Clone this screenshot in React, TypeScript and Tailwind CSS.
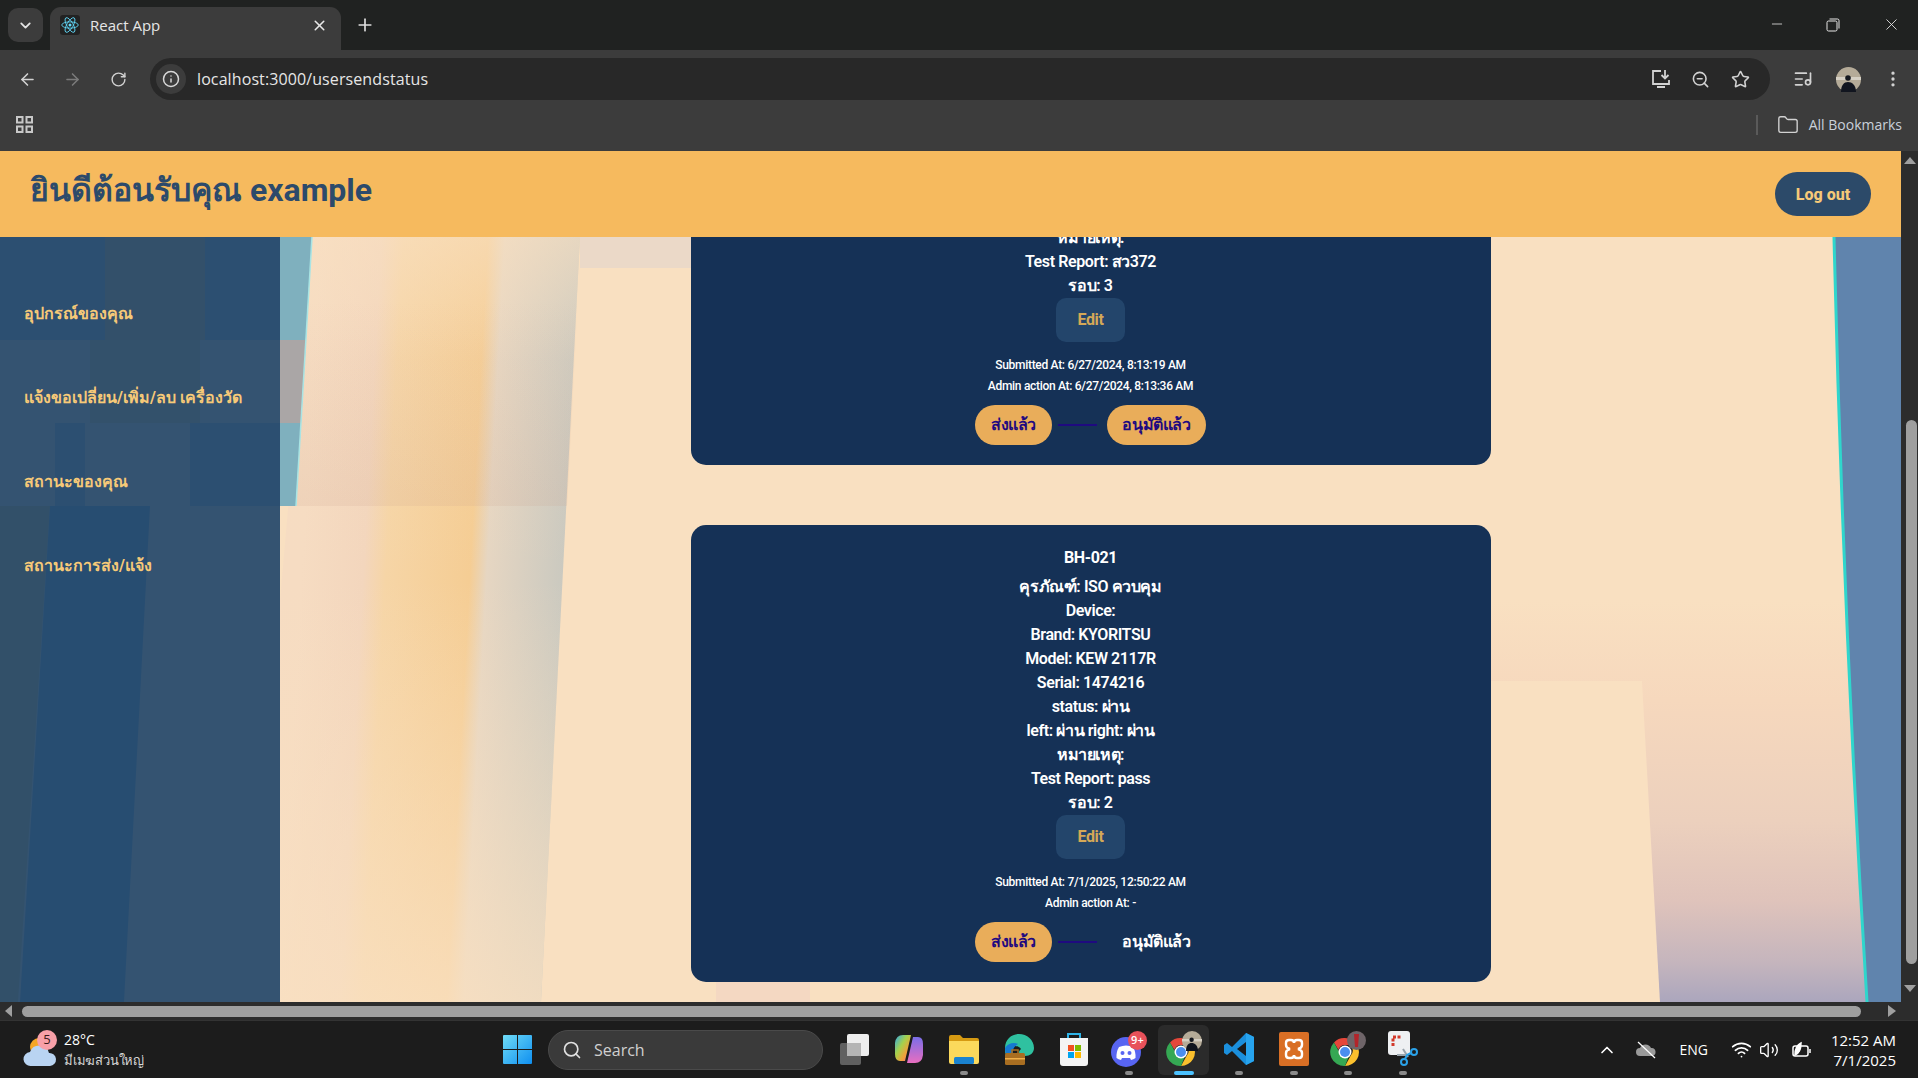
import {
  ArrowLeft,
  ArrowRight,
  ChevronDown,
  ChevronUp,
  EllipsisVertical,
  Folder,
  Info,
  ListMusic,
  Minus,
  Plus,
  RotateCw,
  Search,
  Star,
  Volume2,
  Wifi,
  X,
  ZoomOut,
} from "lucide-react";

const appFont = "font-['Roboto','Noto_Sans','Noto_Sans_CJK_SC',sans-serif]";
const uiFont = "font-['Open_Sans','Noto_Sans','Noto_Sans_CJK_SC',sans-serif]";

const menu = ["อุปกรณ์ของคุณ", "แจ้งขอเปลี่ยน/เพิ่ม/ลบ เครื่องวัด", "สถานะของคุณ", "สถานะการส่ง/แจ้ง"];

const cards = [
  {
    lines: ["หมายเหตุ:", "Test Report: สว372", "รอบ: 3"],
    submitted: "Submitted At: 6/27/2024, 8:13:19 AM",
    admin: "Admin action At: 6/27/2024, 8:13:36 AM",
    approved: true,
  },
  {
    title: "BH-021",
    lines: [
      "คุรภัณฑ์: ISO ควบคุม",
      "Device:",
      "Brand: KYORITSU",
      "Model: KEW 2117R",
      "Serial: 1474216",
      "status: ผ่าน",
      "left: ผ่าน right: ผ่าน",
      "หมายเหตุ:",
      "Test Report: pass",
      "รอบ: 2",
    ],
    submitted: "Submitted At: 7/1/2025, 12:50:22 AM",
    admin: "Admin action At: -",
    approved: false,
  },
];

function ReactLogo() {
  return (
    <div className="flex h-5 w-5 items-center justify-center rounded-[3px] bg-[#222]">
      <svg width="18" height="18" viewBox="-12 -12 24 24" fill="none" stroke="#61dafb" strokeWidth="1.1">
        <circle r="2" fill="#61dafb" stroke="none" />
        <ellipse rx="11" ry="4.2" />
        <ellipse rx="11" ry="4.2" transform="rotate(60)" />
        <ellipse rx="11" ry="4.2" transform="rotate(120)" />
      </svg>
    </div>
  );
}

function Avatar({ size }: { size: number }) {
  return (
    <svg width={size} height={size} viewBox="0 0 25 25">
      <circle cx="12.5" cy="12.5" r="12.5" fill="#b5ab98" />
      <path d="M0 10h25v3H0z" fill="#d6d0c4" />
      <circle cx="12" cy="11" r="2.8" fill="#15181f" />
      <path d="M5 25c0-7 3-10 7-10s8 3 8 10z" fill="#11151f" />
    </svg>
  );
}

function TabStrip() {
  return (
    <div className="flex h-[50px] shrink-0 items-start bg-[#202221] pl-2 pt-2">
      <div className="flex h-[34px] w-[35px] items-center justify-center rounded-[10px] bg-[#3c3c3c] text-[#e4e4e4]">
        <ChevronDown size={17} strokeWidth={2.5} />
      </div>
      <div className="-mt-px ml-[7px] flex h-[43px] w-[291px] items-center rounded-t-[11px] bg-[#3c3c3c] pb-[7px] pl-[10px] pr-[13px]">
        <ReactLogo />
        <span className={`ml-[10px] flex-1 text-[15px] text-[#e6e6e6] ${uiFont}`}>React App</span>
        <X size={17} strokeWidth={2.2} className="text-[#e8e8e8]" />
      </div>
      <Plus size={20} strokeWidth={2} className="ml-[14px] mt-[7px] text-[#dedede]" />
      <div className="ml-auto flex text-[#e8e8e8]">
        <div className="flex w-[50px] justify-center pt-[8px]">
          <Minus size={16} strokeWidth={1.2} />
        </div>
        <div className="flex w-[62px] justify-center pt-[10px]">
          <svg width="14" height="14" viewBox="0 0 14 14" fill="none" stroke="currentColor">
            <rect x="1" y="3" width="10" height="10" rx="1.5" />
            <path d="M3.5 1h8a1.5 1.5 0 0 1 1.5 1.5v8" />
          </svg>
        </div>
        <div className="flex w-[54px] justify-center pt-[7px]">
          <X size={19} strokeWidth={1.1} />
        </div>
      </div>
    </div>
  );
}

function Toolbar() {
  return (
    <div className="flex h-[50px] shrink-0 items-center bg-[#3c3c3c] pl-[18px] pt-[8px]">
      <ArrowLeft size={19} className="text-[#d2d2d2]" />
      <ArrowRight size={19} className="ml-[26px] text-[#7b7b7b]" />
      <RotateCw size={17} className="ml-[28px] text-[#d2d2d2]" />
      <div className="ml-[23px] flex h-[42px] w-[1620px] items-center rounded-full bg-[#282828] pl-[6px] pr-[20px]">
        <div className="flex h-[30px] w-[30px] items-center justify-center rounded-full bg-[#3c3c3c]">
          <Info size={18} className="text-[#d8d8d8]" />
        </div>
        <span className={`ml-[11px] flex-1 text-[16px] tracking-[0.1px] text-[#e6e6e6] ${uiFont}`}>
          localhost:3000/usersendstatus
        </span>
        <svg width="20" height="20" viewBox="0 0 20 20" fill="none" stroke="#d2d2d2" strokeWidth="1.8">
          <path d="M10 2H2v13h16v-4M6 18h8" />
          <path d="M14 1v8M10.5 6l3.5 3.5L17.500 6" />
        </svg>
        <ZoomOut size={19} className="ml-[20px] text-[#d2d2d2]" />
        <Star size={19} className="ml-[21px] text-[#d2d2d2]" />
      </div>
      <ListMusic size={20} className="ml-[23px] text-[#d2d2d2]" />
      <div className="ml-[23px] flex">
        <Avatar size={25} />
      </div>
      <EllipsisVertical size={20} className="ml-[22px] text-[#d2d2d2]" />
    </div>
  );
}

function BookmarksBar() {
  return (
    <div className="flex h-[51px] shrink-0 items-center bg-[#3c3c3c] pl-[16px] pb-[2px]">
      <svg width="17" height="17" viewBox="0 0 17 17" fill="none" stroke="#c8c8c8" strokeWidth="2">
        <rect x="1" y="1" width="5.500" height="5.500" />
        <rect x="10.500" y="1" width="5.500" height="5.500" />
        <rect x="1" y="10.500" width="5.500" height="5.500" />
        <rect x="10.500" y="10.500" width="5.500" height="5.500" />
      </svg>
      <div className="ml-auto h-[20px] w-[2px] bg-[#5a5a5a]" />
      <Folder size={22} strokeWidth={1.5} className="ml-[19px] text-[#d2d2d2]" />
      <span className={`ml-[10px] mr-[16px] text-[14px] text-[#c9d0da] ${uiFont}`}>All Bookmarks</span>
    </div>
  );
}

// blurred desktop picture behind the page
function Wallpaper() {
  return (
    <svg className="absolute inset-0" width="1901" height="851" viewBox="0 151 1901 851" preserveAspectRatio="none">
      <defs>
        <linearGradient id="bands" gradientUnits="userSpaceOnUse" x1="300" y1="600" x2="580" y2="615">
          <stop offset="0" stopColor="#f6dcc2" />
          <stop offset="0.22" stopColor="#f3d6bd" />
          <stop offset="0.3" stopColor="#f6d5a6" />
          <stop offset="0.6" stopColor="#f5cd94" />
          <stop offset="0.66" stopColor="#e6d6c2" />
          <stop offset="1" stopColor="#c4c6bf" />
        </linearGradient>
        <linearGradient id="fade" x1="0" y1="0" x2="0" y2="1">
          <stop offset="0" stopColor="#f9e0c1" stopOpacity="0.6" />
          <stop offset="0.16" stopColor="#f9e0c1" stopOpacity="0.1" />
          <stop offset="0.45" stopColor="#f9e0c1" stopOpacity="0" />
          <stop offset="1" stopColor="#f9e0c1" stopOpacity="0.8" />
        </linearGradient>
        <linearGradient id="shade" x1="0" y1="0" x2="0" y2="1">
          <stop offset="0" stopColor="#c9a08c" stopOpacity="0" />
          <stop offset="1" stopColor="#c9a08c" stopOpacity="0.16" />
        </linearGradient>
        <linearGradient id="dusk" x1="0" y1="0" x2="0" y2="1">
          <stop offset="0" stopColor="#f9e0c1" />
          <stop offset="0.25" stopColor="#f6d8bd" />
          <stop offset="0.55" stopColor="#ecd0bd" />
          <stop offset="0.75" stopColor="#dfc3bb" />
          <stop offset="0.9" stopColor="#c5b5bd" />
          <stop offset="1" stopColor="#aba6bd" />
        </linearGradient>
      </defs>
      <rect x="0" y="151" width="1901" height="851" fill="#f9e0c1" />

      <path d="M0 237h105v103H0z" fill="#a8b6c4" />
      <path d="M105 237h100v103H105z" fill="#f4c478" />
      <path d="M205 237h75v103h-75z" fill="#a8b6c4" />
      <path d="M90 340h110v83H90z" fill="#f2c888" />
      <path d="M55 423h30v83H55zM190 423h90v83h-90z" fill="#a8b6c4" />
      <path d="M0 506h50l-32 496H0z" fill="#e6c070" />
      <path d="M50 506h100l-26 496H20z" fill="#7e9fc4" />

      <path d="M580 237h111v31H580z" fill="#ebd9c8" />
      <path d="M312 237h268l-39 765H280V600z" fill="url(#bands)" />
      <path d="M312 237h268l-39 765H280V600z" fill="url(#fade)" />
      <path d="M300 300h278l-11 206H292z" fill="url(#shade)" />
      <path d="M280 237h32l-16 269h-16z" fill="#7fb0be" />
      <path d="M280 340h26l-5 83h-21z" fill="#aaa6a6" />
      <path d="M312 237l-16 269" fill="none" stroke="#a8e4e4" strokeWidth="1.500" />
      <path d="M716 982h94v20h-94z" fill="#f4d8c2" />

      <path d="M1491 600h360l16 402H1491z" fill="url(#dusk)" />
      <path d="M1491 681h151l18 321h-169z" fill="#f9e0c1" />
      <path d="M1834 237Q1843 620 1867 1002H1901V237z" fill="#6084ad" />
      <path d="M1834 237Q1843 620 1867 1002" fill="none" stroke="#2fd6cc" strokeWidth="3" />
    </svg>
  );
}

function Sidebar() {
  return (
    <aside className="w-[280px] shrink-0 bg-[#1e4468]/90 pt-[35px]">
      {menu.map((m) => (
        <div key={m} className={`flex h-[84px] items-center pl-6 text-[16px] font-bold text-[#f6c978] ${appFont}`}>
          {m}
        </div>
      ))}
    </aside>
  );
}

function StatusCard({ card }: { card: (typeof cards)[number] }) {
  return (
    <div className="flex w-[800px] shrink-0 flex-col items-center rounded-[15px] bg-[#153156] pb-5 pt-[21px] text-center tracking-[-0.4px] text-white">
      {card.title && <h3 className="mb-[5px] h-6 text-[16px] font-bold leading-6">{card.title}</h3>}
      {card.lines.map((l) => (
        <p key={l} className="h-6 text-[16px] font-semibold leading-6">
          {l}
        </p>
      ))}
      <div className="flex h-[44px] w-[69px] items-center justify-center rounded-[10px] bg-[#23456b] text-[16px] font-bold text-[#d4a857]">
        Edit
      </div>
      <p className="mt-[13px] h-[21px] text-[12px] font-medium leading-[21px] tracking-[-0.3px]">{card.submitted}</p>
      <p className="h-[21px] text-[12px] font-medium leading-[21px] tracking-[-0.3px]">{card.admin}</p>
      <div className="mt-[8px] flex items-center">
        <div className="flex h-10 w-[77px] items-center justify-center rounded-[20px] bg-[#e9ad5a] text-[16px] font-bold text-[#1f0a80]">
          ส่งแล้ว
        </div>
        <div className="ml-[6px] mr-[10px] h-[2px] w-[39px] bg-[#1f0a80]" />
        <div
          className={
            card.approved
              ? "flex h-10 w-[99px] items-center justify-center rounded-[20px] bg-[#e9ad5a] text-[16px] font-bold text-[#1f0a80]"
              : "flex h-10 w-[99px] items-center justify-center rounded-[20px] text-[16px] font-bold text-white"
          }
        >
          อนุมัติแล้ว
        </div>
      </div>
    </div>
  );
}

function PageViewport() {
  return (
    <div className="flex h-[851px] shrink-0">
      <div className={`relative flex min-w-0 flex-1 flex-col ${appFont}`}>
        <Wallpaper />
        <header className="relative flex h-[86px] shrink-0 items-center justify-between bg-[#f6ba5e] pl-[30px] pr-[30px]">
          <h1 className="-mt-[8px] text-[32px] font-bold text-[#2c4a6b]">ยินดีต้อนรับคุณ example</h1>
          <button className="h-[44px] w-[96px] rounded-full bg-[#2c4a69] pt-px text-[16px] font-extrabold text-[#f6c978]">
            Log out
          </button>
        </header>
        <div className="relative flex min-h-0 flex-1">
          <Sidebar />
          <main className="flex min-w-0 flex-1 flex-col items-center justify-end gap-[60px] overflow-hidden pb-5">
            {cards.map((c) => (
              <StatusCard key={c.submitted} card={c} />
            ))}
          </main>
        </div>
      </div>
      <div className="flex w-[17px] shrink-0 flex-col items-center bg-[#2c2c2c] pt-[6px]">
        <div className="h-0 w-0 border-x-[6px] border-b-[7px] border-x-transparent border-b-[#9f9f9f]" />
        <div className="ml-[4px] mt-[256px] h-[544px] w-[11px] rounded-full bg-[#9f9f9f]" />
        <div className="mt-[21px] h-0 w-0 border-x-[6px] border-t-[7px] border-x-transparent border-t-[#9f9f9f]" />
      </div>
    </div>
  );
}

function HScrollbar() {
  return (
    <div className="flex h-[18px] shrink-0 items-center bg-[#2c2c2c] pl-[5px]">
      <div className="h-0 w-0 border-y-[6px] border-r-[7px] border-y-transparent border-r-[#9f9f9f]" />
      <div className="ml-[10px] h-[11px] w-[1839px] rounded-full bg-[#9f9f9f]" />
      <div className="ml-[27px] h-0 w-0 border-y-[6px] border-l-[8px] border-y-transparent border-l-[#9f9f9f]" />
    </div>
  );
}

function WeatherIcon() {
  return (
    <div className="relative h-[40px] w-[34px]">
      <svg width="34" height="40" viewBox="0 0 34 40" className="absolute left-0 top-0">
        <circle cx="16" cy="17" r="9" fill="#f5a623" />
        <path d="M8 36a7 7 0 0 1-1-14 10 10 0 0 1 19 1 6.500 6.500 0 0 1 1 13z" fill="#b9d4f2" />
      </svg>
      <span className="absolute left-[14px] top-0 flex h-5 w-5 items-center justify-center rounded-full bg-[#f8a0a8] text-[13px] text-[#3a1a1a]">
        5
      </span>
    </div>
  );
}

function WindowsLogo() {
  return (
    <svg width="29" height="29" viewBox="0 0 29 29">
      <defs>
        <linearGradient id="win" x1="0" y1="0" x2="1" y2="1">
          <stop offset="0" stopColor="#6fdcf7" />
          <stop offset="1" stopColor="#0f8ff0" />
        </linearGradient>
      </defs>
      <path d="M0 1a1 1 0 0 1 1-1h13v14H0zM15 0h13a1 1 0 0 1 1 1v13H15zM0 15h14v14H1a1 1 0 0 1-1-1zM15 15h14v13a1 1 0 0 1-1 1H15z" fill="url(#win)" />
    </svg>
  );
}

function ChromeIcon() {
  return (
    <svg width="30" height="30" viewBox="0 0 30 30">
      <path d="M15 1a14 14 0 0 1 12.100 7H15a7 7 0 0 0-6.600 4.700L4 5.400A14 14 0 0 1 15 1z" fill="#e5473a" />
      <path d="M27.100 8A14 14 0 0 1 15 29l5.800-10.500A7 7 0 0 0 20 8z" fill="#fbc02d" />
      <path d="M15 29A14 14 0 0 1 4 5.400l6 11a7 7 0 0 0 8.800 3z" fill="#35a853" />
      <circle cx="15" cy="15" r="6.500" fill="#fff" />
      <circle cx="15" cy="15" r="5" fill="#4a8ef0" />
    </svg>
  );
}

const taskIcons = [
  {
    key: "view",
    icon: (
      <svg width="30" height="32" viewBox="0 0 30 32">
        <rect x="1" y="10" width="21" height="22" rx="2" fill="#606060" />
        <rect x="8" y="1" width="22" height="22" rx="2" fill="#eeeeee" />
        <rect x="8" y="10" width="14" height="13" fill="#b5b5b5" />
      </svg>
    ),
  },
  {
    key: "copilot",
    icon: (
      <svg width="28" height="30" viewBox="0 0 28 30">
        <defs>
          <linearGradient id="cop" x1="0" y1="0" x2="1" y2="1">
            <stop offset="0" stopColor="#2fa9e8" />
            <stop offset="0.4" stopColor="#a6d14a" />
            <stop offset="0.7" stopColor="#f3a03a" />
            <stop offset="1" stopColor="#e35ea8" />
          </linearGradient>
          <linearGradient id="cop2" x1="0" y1="0" x2="0" y2="1">
            <stop offset="0" stopColor="#7a6ee8" />
            <stop offset="1" stopColor="#e86ec0" />
          </linearGradient>
        </defs>
        <path d="M8 1h8l-6 26H5Q0 27 0 20V9q1-8 8-8z" fill="url(#cop)" />
        <path d="M20 29h-8l6-26h5q5 0 5 7v11q-1 8-8 8z" fill="url(#cop2)" />
      </svg>
    ),
  },
  {
    key: "files",
    dot: true,
    icon: (
      <svg width="30" height="30" viewBox="0 0 30 30">
        <path d="M0 3a2 2 0 0 1 2-2h9l3 3h14a2 2 0 0 1 2 2v4H0z" fill="#d69a12" />
        <path d="M0 7h30v21a2 2 0 0 1-2 2H2a2 2 0 0 1-2-2z" fill="#fbd95c" />
        <rect x="5" y="23" width="20" height="7" rx="1.500" fill="#1a83d0" />
      </svg>
    ),
  },
  {
    key: "edge",
    icon: (
      <svg width="30" height="32" viewBox="0 0 30 32">
        <path d="M1 15C1 6 8 1 15 1c8 0 15 6 15 14 0 5-4 8-9 8-3 0-6-1-6-4 0-1 1-2 2-3-2-3-7-4-10-2-3 1-5 4-6 8z" fill="#2fc1a0" />
        <path d="M1 15c3-5 9-6 13-4-3 2-6 5-5 10 0 4 3 8 8 9C8 31 1 25 1 15z" fill="#1679d1" />
        <rect x="1" y="20" width="20" height="12" rx="1.500" fill="#a96e21" />
        <rect x="8" y="17" width="6" height="4" fill="none" stroke="#a96e21" strokeWidth="1.500" />
        <rect x="1" y="25" width="20" height="1.500" fill="#f0b04a" />
      </svg>
    ),
  },
  {
    key: "store",
    icon: (
      <svg width="30" height="34" viewBox="0 0 30 34">
        <path d="M9 7V2h12v5" fill="none" stroke="#2fb4e8" strokeWidth="2" />
        <path d="M1 6h28v25a3 3 0 0 1-3 3H4a3 3 0 0 1-3-3z" fill="#f4f4f4" />
        <rect x="9" y="13" width="6" height="6" fill="#f25022" />
        <rect x="16" y="13" width="6" height="6" fill="#7fba00" />
        <rect x="9" y="20" width="6" height="6" fill="#00a4ef" />
        <rect x="16" y="20" width="6" height="6" fill="#ffb900" />
      </svg>
    ),
  },
  {
    key: "discord",
    dot: true,
    icon: (
      <div className="relative h-[36px] w-[36px]">
        <svg width="30" height="30" viewBox="0 0 30 30" className="absolute bottom-0 left-0">
          <circle cx="15" cy="15" r="15" fill="#5865f2" />
          <path d="M8 10q7-3 14 0 3 5 2.500 11-2 1.500-4.500 2l-1-2h-8l-1 2q-2.500-.5-4.500-2Q5 15 8 10z" fill="#fff" />
          <circle cx="11.500" cy="16" r="2" fill="#5865f2" />
          <circle cx="18.500" cy="16" r="2" fill="#5865f2" />
        </svg>
        <span className="absolute right-0 top-0 flex h-[19px] w-[19px] items-center justify-center rounded-full bg-[#e8515a] text-[11px] font-semibold text-white">
          9+
        </span>
      </div>
    ),
  },
  {
    key: "chrome",
    active: true,
    icon: (
      <div className="relative h-[36px] w-[36px]">
        <div className="absolute bottom-0 left-0">
          <ChromeIcon />
        </div>
        <div className="absolute right-0 top-0 flex">
          <Avatar size={20} />
        </div>
      </div>
    ),
  },
  {
    key: "code",
    dot: true,
    icon: (
      <svg width="30" height="34" viewBox="0 0 30 34">
        <path d="M22 1l8 4v24l-8 4L8 19l-5 4-3-2v-8l3-2 5 4z" fill="#1b8fdc" />
        <path d="M22 10v14l-9-7z" fill="#1a1a1a" />
        <path d="M22 1l8 4v24l-8 4z" fill="#27a4ee" />
      </svg>
    ),
  },
  {
    key: "xampp",
    dot: true,
    icon: (
      <svg width="30" height="34" viewBox="0 0 30 34">
        <rect width="30" height="34" rx="2" fill="#d96f25" />
        <path d="M7 11q0-3 3-3h2q3 0 3 3 0-3 3-3h2q3 0 3 3v2q0 3-4 4 4 1 4 4v2q0 3-3 3h-2q-3 0-3-3 0 3-3 3h-2q-3 0-3-3v-2q0-3 4-4-4-1-4-4z" fill="none" stroke="#fff" strokeWidth="2.400" />
      </svg>
    ),
  },
  {
    key: "chrome2",
    dot: true,
    icon: (
      <div className="relative h-[36px] w-[36px]">
        <div className="absolute bottom-0 left-0">
          <ChromeIcon />
        </div>
        <svg width="19" height="19" viewBox="0 0 19 19" className="absolute right-0 top-0">
          <circle cx="9.500" cy="9.500" r="9.500" fill="#6e6468" />
          <path d="M7 3h5l-1 13H8z" fill="#b3242a" />
        </svg>
      </div>
    ),
  },
  {
    key: "snip",
    dot: true,
    icon: (
      <svg width="30" height="36" viewBox="0 0 30 36">
        <rect width="22" height="24" rx="3" fill="#eef0f2" />
        <path d="M5 15V6h9" fill="none" stroke="#d23a2c" strokeWidth="3" strokeDasharray="3 1.500" />
        <path d="M15 18l5 8M9 24h9" stroke="#9aa5ad" strokeWidth="2" />
        <circle cx="16" cy="31" r="3" fill="none" stroke="#2aa1e8" strokeWidth="2" />
        <circle cx="26" cy="21" r="3" fill="none" stroke="#2aa1e8" strokeWidth="2" />
        <path d="M17 28l2-4 4-2" fill="none" stroke="#2aa1e8" strokeWidth="2" />
      </svg>
    ),
  },
];

function Taskbar() {
  return (
    <div className={`flex h-[58px] shrink-0 items-center border-t border-[#333] bg-[#1c1c1c] text-white ${uiFont}`}>
      <div className="flex w-[503px] shrink-0 items-center pl-[23px]">
        <WeatherIcon />
        <div className="ml-[7px] flex flex-col">
          <span className="text-[14px] leading-[20px]">28°C</span>
          <span className="text-[13px] leading-[20px] tracking-[-0.2px] text-[#d6d6d6]">มีเมฆส่วนใหญ่</span>
        </div>
      </div>
      <WindowsLogo />
      <div className="ml-[16px] flex h-[40px] w-[275px] items-center rounded-full border border-[#4a4a4a] bg-[#3a3a3a] pl-[13px]">
        <Search size={20} className="text-[#e0e0e0]" />
        <span className="ml-[12px] text-[16px] text-[#d0d0d0]">Search</span>
      </div>
      <div className="ml-[4px] flex">
        {taskIcons.map((t) => (
          <div key={t.key} className="relative flex h-[57px] w-[54.9px] items-center justify-center">
            {t.active && <div className="absolute inset-x-[2px] top-[4px] h-[50px] rounded-[6px] bg-[#2b2b2b]" />}
            <div className="relative flex -translate-y-[1px]">{t.icon}</div>
            {t.dot && <div className="absolute bottom-[3px] h-[4px] w-[8px] rounded-full bg-[#8a8a8a]" />}
            {t.active && <div className="absolute bottom-[3px] h-[4px] w-[20px] rounded-full bg-[#4cc2ff]" />}
          </div>
        ))}
      </div>
      <div className="ml-auto flex items-center pr-[22px]">
        <ChevronUp size={20} strokeWidth={2} />
        <svg width="22" height="18" viewBox="0 0 22 18" className="ml-[18px]">
          <path d="M5 15a4 4 0 0 1 0-8 6 6 0 0 1 11 0 4 4 0 0 1 1 8z" fill="#9a9a9a" />
          <path d="M3 1l17 16" stroke="#fff" strokeWidth="1.200" />
        </svg>
        <span className="ml-[22px] text-[14px]">ENG</span>
        <Wifi size={21} className="ml-[23px]" />
        <Volume2 size={20} strokeWidth={1.600} className="ml-[7px]" />
        <svg width="20" height="18" viewBox="0 0 20 18" className="ml-[13px]" fill="none" stroke="#fff" strokeWidth="1.500">
          <rect x="1" y="5" width="15" height="10" rx="2" />
          <path d="M18 8v4" />
          <path d="M3 14c0-6 2-10 6-12 0 6-1 10-6 12z" fill="#fff" />
        </svg>
        <div className="ml-[19px] flex flex-col items-end text-[15px] leading-[20px]">
          <span>12:52 AM</span>
          <span>7/1/2025</span>
        </div>
      </div>
    </div>
  );
}

export default function App() {
  return (
    <div className="flex h-[1078px] w-full flex-col overflow-hidden bg-[#202221]">
      <TabStrip />
      <Toolbar />
      <BookmarksBar />
      <PageViewport />
      <HScrollbar />
      <Taskbar />
    </div>
  );
}
